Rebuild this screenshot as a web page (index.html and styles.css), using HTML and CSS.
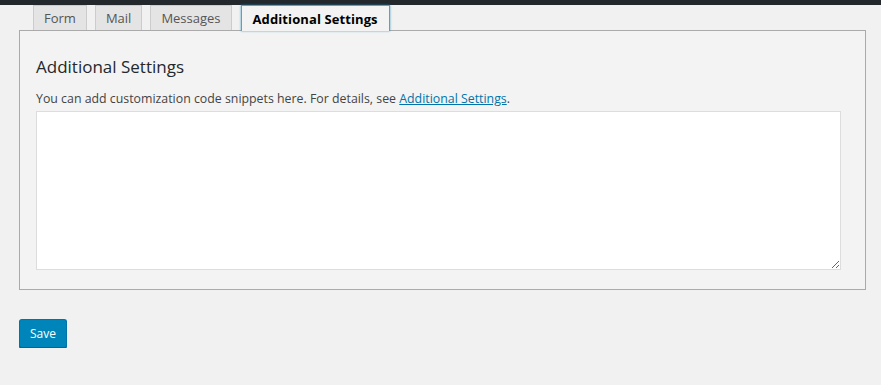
FILE: index.html
```html
<!DOCTYPE html>
<html>
<head>
    <meta charset="UTF-8">
    <title>Additional Settings</title>
    <link rel="stylesheet" href="styles.css">
</head>
<body>
    <div class="topbar"></div>

    <div class="wrap">
        <div class="tabs">
            <a class="tab">Form</a>
            <a class="tab">Mail</a>
            <a class="tab">Messages</a>
            <a class="tab active">Additional Settings</a>
        </div>

        <div class="panel">
            <h2>Additional Settings</h2>
            <p class="desc">You can add customization code snippets here. For details, see <a href="#">Additional Settings</a>.</p>
            <textarea class="code"></textarea>
        </div>

        <button class="save">Save</button>
    </div>
</body>
</html>
```

FILE: styles.css
```css
body {
    margin: 0;
    background-color: #f1f1f1;
    font-family: "Open Sans", "Noto Sans", sans-serif;
    font-size: 12px;
    color: #444;
}
.topbar {
    height: 5px;
    background-color: #23282d;
}
.wrap {
    padding-left: 19px;
    width: 847px;
}
.tabs {
    display: flex;
    gap: 8px;
    margin-left: 14px;
    height: 25px;
    position: relative;
    z-index: 1;
}
.tab {
    display: flex;
    align-items: center;
    padding: 0 10px;
    height: 25px;
    box-sizing: border-box;
    background-color: #e4e4e4;
    border: 1px solid #ccc;
    border-bottom: none;
    color: #555;
    font-size: 13px;
}
.tab.active {
    background-color: #f3f3f3;
    border: 1px solid #5b9dd9;
    border-bottom: none;
    box-shadow: 0 0 2px rgba(30, 140, 190, 0.8);
    color: #000;
    font-weight: bold;
    height: 26px;
    padding: 0 11px;
    margin-left: 1px;
    letter-spacing: 0.1px;
}
.panel {
    background-color: #f3f3f3;
    border: 1px solid #aaa;
    padding: 24px 24px 19px 16px;
    box-sizing: border-box;
    width: 847px;
}
.panel h2 {
    margin: 0 0 12px;
    font-size: 17px;
    font-weight: normal;
    color: #23282d;
}
.desc {
    margin: 0 0 4px;
    font-size: 12.35px;
    color: #444;
}
.desc a {
    color: #0073aa;
}
.code {
    display: block;
    width: 805px;
    height: 159px;
    box-sizing: border-box;
    border: 1px solid #ddd;
    background-color: #fff;
    margin: 0;
}
.save {
    margin-top: 29px;
    height: 29px;
    padding: 0 10px;
    background-color: #0085ba;
    border: 1px solid #0073aa;
    border-bottom-color: #006799;
    border-radius: 3px;
    box-shadow: 0 1px 0 #006799;
    color: #fff;
    font-family: "Open Sans", "Noto Sans", sans-serif;
    font-size: 12px;
}
```
